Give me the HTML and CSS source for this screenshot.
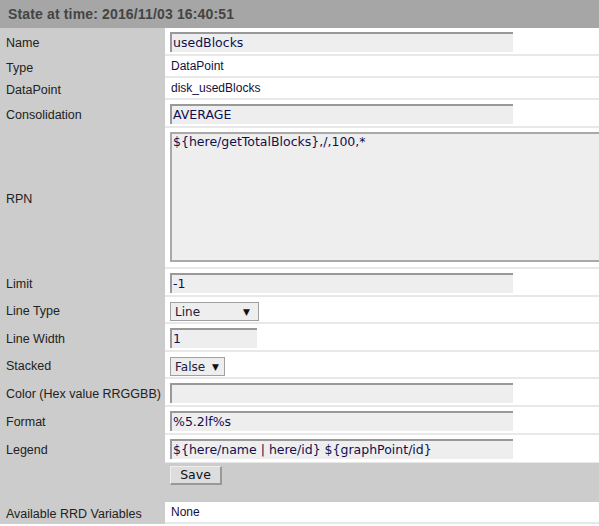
FILE: index.html
```html
<!DOCTYPE html>
<html>
<head>
<meta charset="utf-8">
<link rel="stylesheet" href="styles.css">
</head>
<body>
<div class="page">
  <div class="header">State at time: 2016/11/03 16:40:51</div>
  <div class="form">
    <div class="label">Name</div>
    <div class="value"><div class="input wide">usedBlocks</div></div>

    <div class="label">Type</div>
    <div class="value text">DataPoint</div>

    <div class="label">DataPoint</div>
    <div class="value text">disk_usedBlocks</div>

    <div class="label">Consolidation</div>
    <div class="value"><div class="input wide">AVERAGE</div></div>

    <div class="label">RPN</div>
    <div class="value tall"><div class="textarea">${here/getTotalBlocks},/,100,*</div></div>

    <div class="label">Limit</div>
    <div class="value"><div class="input wide">-1</div></div>

    <div class="label">Line Type</div>
    <div class="value sel"><div class="select linetype"><span>Line</span><span class="arrow">▼</span></div></div>

    <div class="label">Line Width</div>
    <div class="value"><div class="input short">1</div></div>

    <div class="label">Stacked</div>
    <div class="value sel"><div class="select stacked"><span>False</span><span class="arrow">▼</span></div></div>

    <div class="label">Color (Hex value RRGGBB)</div>
    <div class="value"><div class="input wide"></div></div>

    <div class="label">Format</div>
    <div class="value"><div class="input wide">%5.2lf%s</div></div>

    <div class="label">Legend</div>
    <div class="value last"><div class="input wide">${here/name | here/id} ${graphPoint/id}</div></div>
  </div>
  <div class="saverow"><div class="button">Save</div></div>
  <div class="form">
    <div class="label">Available RRD Variables</div>
    <div class="value text">None</div>
  </div>
</div>
</body>
</html>
```
FILE: styles.css
```css
html, body {
  margin: 0;
  padding: 0;
  background: #ffffff;
  overflow: hidden;
}
.page {
  width: 599px;
  height: 526px;
  background: #ffffff;
  font-family: "Liberation Sans", Arial, sans-serif;
}
.header {
  height: 28px;
  background: #a6a6a6;
  color: #444444;
  font-weight: bold;
  font-size: 14px;
  letter-spacing: 0.15px;
  line-height: 28px;
  padding-left: 8px;
  font-family: "Liberation Sans", Arial, sans-serif;
}
.form {
  display: grid;
  grid-template-columns: 165px 1fr;
}
.label {
  background: #cccccc;
  color: #222222;
  font-size: 12.5px;
  padding: 1px 0 0 6px;
  display: flex;
  align-items: center;
  white-space: nowrap;
}
.value {
  padding: 4px 0 2px 5px;
  border-bottom: 2px solid #e8e8e8;
  display: flex;
  align-items: center;
}
.value.text {
  height: 22px;
  box-sizing: border-box;
  padding: 0 0 0 6px;
  font-size: 12px;
  color: #101040;
}
.value.tall {
  padding: 4px 0 5px 5px;
}
.value.sel {
  padding: 5px 0 1px 5px;
}
.value.last {
  padding-bottom: 3px;
  border-bottom: 1px solid #e8e8e8;
}
.input {
  box-sizing: border-box;
  height: 20px;
  background: #eeeeee;
  border-style: solid;
  border-width: 2px 0 0 2px;
  border-color: #999999;
  font-family: "DejaVu Sans", Verdana, sans-serif;
  font-size: 12.5px;
  line-height: 17px;
  color: #101050;
  padding-left: 1px;
  white-space: nowrap;
  overflow: hidden;
}
.input.wide { width: 343px; }
.input.short { width: 87px; }
.textarea {
  box-sizing: border-box;
  width: 440px;
  height: 130px;
  background: #eeeeee;
  border: 2px solid #a9a9a9;
  font-family: "DejaVu Sans", Verdana, sans-serif;
  font-size: 12.5px;
  line-height: 16px;
  color: #101050;
  padding: 0 1px;
}
.select {
  box-sizing: border-box;
  height: 19px;
  background: #eeeeee;
  border: 1px solid #a0a0a0;
  display: flex;
  align-items: center;
  justify-content: space-between;
  font-family: "DejaVu Sans", Verdana, sans-serif;
  font-size: 12px;
  color: #202040;
  padding: 0 5px 0 4px;
}
.select .arrow {
  font-size: 9px;
  color: #111111;
}
.select.linetype { width: 89px; padding-right: 8px; }
.select.stacked { width: 55px; }
.saverow {
  background: #cccccc;
  height: 39px;
  padding: 3px 0 0 170px;
  box-sizing: border-box;
}
.button {
  box-sizing: border-box;
  width: 52px;
  height: 19px;
  background: #dddddd;
  border-style: solid;
  border-width: 1px 2px 2px 1px;
  border-color: #eeeeee #999999 #999999 #eeeeee;
  font-family: "DejaVu Sans", Verdana, sans-serif;
  font-size: 12.5px;
  color: #111111;
  text-align: center;
  line-height: 16px;
}
```
